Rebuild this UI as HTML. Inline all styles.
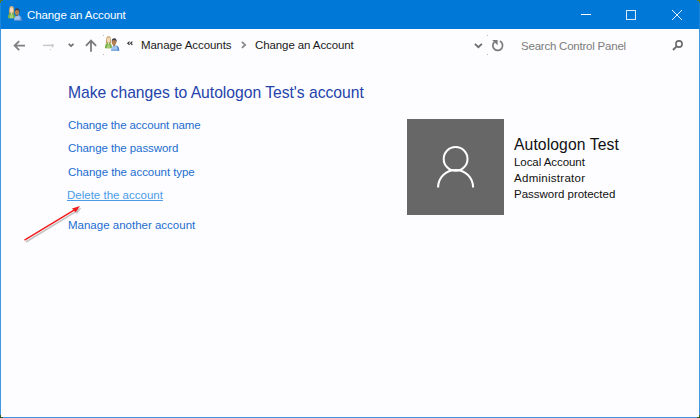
<!DOCTYPE html>
<html><head><meta charset="utf-8">
<style>
*{margin:0;padding:0;box-sizing:border-box}
html,body{width:700px;height:418px;overflow:hidden;background:#fdfdff;font-family:"Liberation Sans",sans-serif}
.win{position:absolute;left:0;top:0;width:700px;height:418px;border:1px solid #3f98e2;background:#fdfdff}
.tb{position:absolute;left:0;top:0;width:700px;height:29px;background:#0078d7;border-left:1px solid #1a86da;border-right:1px solid #1a86da}
.t{position:absolute;white-space:nowrap;line-height:1}
svg{position:absolute;overflow:visible}
.lnk{color:#1c6dd0;font-size:11.5px}
</style></head><body>
<div class="win"></div>
<div class="tb"></div>
<!-- title icon -->
<svg style="left:0;top:0;width:0;height:0">
 <defs>
  <g id="ua">
   <path d="M0.9 7.4 Q0.6 -0.2 3.6 -0.1 Q6.4 -0.2 6.2 7.4Z" fill="#c09a62"/>
   <path d="M-0.1 12.3 Q-0.1 7 3.5 6.6 Q7 7 7 12.3Z" fill="#7db04a"/>
   <path d="M1.8 12.2 Q2 8.6 3.5 8 Q5 8.6 5.2 12.2Z" fill="#a6cf7c"/>
   <path d="M2.6 6.8 L3.5 8.6 4.4 6.8Z" fill="#f2ead8"/>
   <ellipse cx="3.6" cy="4" rx="1.9" ry="2.7" fill="#f0d8b8"/>
   <path d="M1.5 2.6 Q3.6 0.2 5.8 2.4 L5.4 0.9 Q3.6 -0.3 1.9 0.9Z" fill="#dcc08e"/>
   <path d="M6 14.6 Q6 9.6 10.2 9.2 Q14.2 9.6 14.2 14.6Z" fill="#9fc5f0"/>
   <path d="M11.2 9.4 Q14.2 10.2 14.2 14.6 L12.6 14.6 Q12.8 11.2 11.2 9.4Z" fill="#3f7cc8"/>
   <path d="M6 13.8 L14.2 13.8 14.2 14.6 6 14.6Z" fill="#4f86cc"/>
   <ellipse cx="9" cy="6.2" rx="2.1" ry="2.9" fill="#b38150"/>
   <path d="M6.8 5.8 Q6.4 2.3 9.3 2.3 Q12 2.3 11.7 6.8 L11 5.2 Q10.6 3.9 8.6 3.9 Q7.4 4.1 6.8 5.8Z" fill="#3e3e4a"/>
   <path d="M7.9 9 L9 10.6 10.1 9Z" fill="#7e5530"/>
  </g>
 </defs>
</svg>
<svg style="left:8px;top:6px" width="16" height="16" viewBox="0 0 16 16"><use href="#ua"/></svg>
<div class="t" style="left:27px;top:10px;font-size:11.5px;letter-spacing:-0.1px;color:#fff">Change an Account</div>
<!-- window controls -->
<div style="position:absolute;left:581px;top:14px;width:10px;height:1px;background:#fff"></div>
<div style="position:absolute;left:626px;top:10px;width:10px;height:10px;border:1px solid rgba(255,255,255,0.85)"></div>
<svg style="left:672px;top:10px" width="10" height="10" viewBox="0 0 10 10"><path d="M0 0L10 10M10 0L0 10" stroke="rgba(255,255,255,0.9)" stroke-width="1"/></svg>

<!-- nav -->
<svg style="left:13px;top:40px" width="12" height="11" viewBox="0 0 12 11"><path d="M12 5.6H1.6M6.2 1.1L1.6 5.6 6.2 10.1" stroke="#808080" stroke-width="1.8" fill="none"/></svg>
<svg style="left:42px;top:40px" width="14" height="12" viewBox="0 0 14 12"><path d="M1 5.4H12" stroke="#c9c9c9" stroke-width="1.5" fill="none"/><path d="M10.4 4V7.6" stroke="#c9c9c9" stroke-width="1.2"/><rect x="8" y="9" width="1.2" height="1.2" fill="#cfcfcf"/></svg>
<svg style="left:68px;top:43px" width="7" height="5" viewBox="0 0 7 5"><path d="M0.7 0.9L3.1 3.1 5.5 0.9" stroke="#6e6e6e" stroke-width="1.7" fill="none"/></svg>
<svg style="left:85px;top:39px" width="12" height="13" viewBox="0 0 12 13"><path d="M6 12.8V1.6M0.9 6.9L6 1.6 11.1 6.9" stroke="#7a7a7a" stroke-width="1.8" fill="none"/></svg>
<div style="position:absolute;left:103px;top:35px;width:1px;height:1px;background:#b8b8b8"></div>
<div style="position:absolute;left:103px;top:54px;width:1px;height:1px;background:#b8b8b8"></div>
<svg style="left:105px;top:36px" width="16" height="16" viewBox="0 0 16 16"><use href="#ua"/></svg>
<svg style="left:127px;top:41px" width="6" height="5" viewBox="0 0 6 5"><path d="M2.6 0.6L0.8 2.2 2.6 3.8M5.4 0.6L3.6 2.2 5.4 3.8" stroke="#3a3a3a" stroke-width="1.2" fill="none"/></svg>
<div class="t" style="left:141px;top:40px;font-size:11.5px;letter-spacing:-0.06px;color:#1a1a1a">Manage Accounts</div>
<svg style="left:241px;top:41px" width="6" height="8" viewBox="0 0 6 8"><path d="M0.9 0.9L4.2 3.9 0.9 6.9" stroke="#858585" stroke-width="1.7" fill="none"/></svg>
<div class="t" style="left:255px;top:40px;font-size:11.5px;letter-spacing:-0.1px;color:#1a1a1a">Change an Account</div>
<svg style="left:474px;top:43px" width="9" height="6" viewBox="0 0 9 6"><path d="M0.9 0.9L4.4 4.2 7.9 0.9" stroke="#6e6e6e" stroke-width="1.9" fill="none"/></svg>
<div style="position:absolute;left:487px;top:35px;width:1px;height:1px;background:#b8b8b8"></div>
<div style="position:absolute;left:487px;top:54px;width:1px;height:1px;background:#b8b8b8"></div>
<svg style="left:492px;top:40px" width="11" height="11" viewBox="0 0 11 11"><path d="M7.85 1.1A4.9 4.9 0 1 1 2.4 1.9" stroke="#7a7a7a" stroke-width="1.7" fill="none"/><path d="M0.2 0L5.6 0 5.6 5.2Z" fill="#7a7a7a"/></svg>
<div class="t" style="left:521px;top:41px;font-size:11.5px;letter-spacing:-0.22px;color:#7b7b7b">Search Control Panel</div>
<svg style="left:672px;top:40px" width="11" height="11" viewBox="0 0 11 11"><circle cx="7" cy="4" r="3.1" stroke="#6a6a6a" stroke-width="1.6" fill="none"/><path d="M4.8 6.2L1 10" stroke="#6a6a6a" stroke-width="1.9"/></svg>

<!-- content -->
<div class="t" style="left:68px;top:85px;font-size:15.7px;letter-spacing:-0.02px;color:#2443ab">Make changes to Autologon Test's account</div>
<div class="t lnk" style="left:68px;top:120px;letter-spacing:-0.1px">Change the account name</div>
<div class="t lnk" style="left:68px;top:143px;letter-spacing:-0.08px">Change the password</div>
<div class="t lnk" style="left:68px;top:167px;letter-spacing:-0.05px">Change the account type</div>
<div class="t lnk" style="left:67px;top:190px;color:#4a9ce8;text-decoration:underline">Delete the account</div>
<div class="t lnk" style="left:68px;top:220px">Manage another account</div>

<!-- arrow -->
<svg style="left:0;top:0" width="700" height="418" viewBox="0 0 700 418">
  <g transform="translate(1.4,1.8)" opacity="0.5">
    <path d="M24.5 240.2L74.5 209.8" stroke="#8a8a8a" stroke-width="1.5"/>
    <path d="M80 206L72 208.4 75.6 212.2Z" fill="#8a8a8a"/>
  </g>
  <path d="M24.5 240.2L74.5 209.8" stroke="#f21c1c" stroke-width="1.5"/>
  <path d="M80 206L72 208.4 75.6 212.2Z" fill="#f21c1c"/>
</svg>

<!-- tile -->
<div style="position:absolute;left:407px;top:119px;width:97px;height:96px;background:#676767"></div>
<svg style="left:407px;top:119px" width="97" height="96" viewBox="0 0 97 96">
  <circle cx="48.6" cy="39.9" r="11.9" stroke="#fff" stroke-width="2" fill="none"/>
  <path d="M31.1 68.4A17.5 17.5 0 0 1 66.1 68.4" stroke="#fff" stroke-width="2" fill="none"/>
</svg>
<div class="t" style="left:514px;top:137px;font-size:15.7px;letter-spacing:0.1px;color:#111">Autologon Test</div>
<div class="t" style="left:514px;top:157px;font-size:11.5px;letter-spacing:-0.06px;color:#111">Local Account</div>
<div class="t" style="left:514px;top:173px;font-size:11.5px;letter-spacing:0.28px;color:#111">Administrator</div>
<div class="t" style="left:514px;top:189px;font-size:11.5px;letter-spacing:-0.02px;color:#111">Password protected</div>
<!-- corners -->
<div style="position:absolute;left:0;top:0;width:3px;height:1px;background:#557a2e"></div>
<div style="position:absolute;left:0;top:0;width:1px;height:3px;background:#557a2e"></div>
<div style="position:absolute;left:697px;top:0;width:3px;height:1px;background:#557a2e"></div>
<div style="position:absolute;left:699px;top:0;width:1px;height:3px;background:#557a2e"></div>
<div style="position:absolute;left:0;top:417px;width:3px;height:1px;background:#2f5a26"></div>
<div style="position:absolute;left:0;top:415px;width:1px;height:3px;background:#2f5a26"></div>
<div style="position:absolute;left:697px;top:417px;width:3px;height:1px;background:#2f5a26"></div>
<div style="position:absolute;left:699px;top:415px;width:1px;height:3px;background:#2f5a26"></div>
</body></html>
